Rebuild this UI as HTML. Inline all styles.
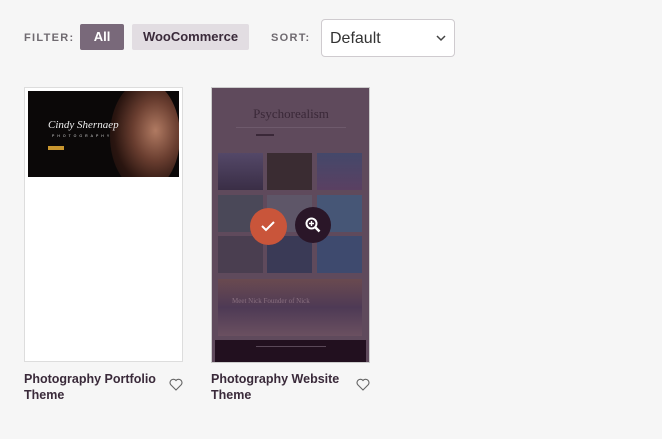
<!DOCTYPE html>
<html><head><meta charset="utf-8"><style>
*{margin:0;padding:0;box-sizing:border-box}
body{width:662px;height:439px;background:#f6f6f6;font-family:"Liberation Sans",sans-serif;position:relative;overflow:hidden}
.a{position:absolute}
.lbl{font-size:11px;letter-spacing:1.3px;color:#6f6a70;font-weight:bold}
.t{font-size:12.5px;font-weight:bold;color:#3a2a3a;line-height:16px}
.tile{position:absolute;width:45px;height:37px}
</style></head><body>
<div class="a lbl" style="left:24px;top:32px">FILTER:</div>
<div class="a" style="left:80px;top:24px;width:44px;height:26px;background:#79697a;border-radius:2px;color:#fff;font-size:13px;font-weight:bold;text-align:center;line-height:26px">All</div>
<div class="a" style="left:132px;top:24px;width:117px;height:26px;background:#e2dde2;border-radius:2px;color:#3a2a3a;font-size:13px;font-weight:bold;text-align:center;line-height:26px">WooCommerce</div>
<div class="a lbl" style="left:271px;top:32px">SORT:</div>
<div class="a" style="left:321px;top:19px;width:134px;height:38px;background:#fff;border:1px solid #cfcbcf;border-radius:4px;font-size:16px;color:#333;padding-left:8px;line-height:37px">Default
<svg class="a" style="right:8px;top:15px" width="10" height="7" viewBox="0 0 10 7"><path d="M1 1l4 4 4-4" stroke="#444" stroke-width="1.5" fill="none"/></svg></div>

<div class="a" style="left:24px;top:87px;width:159px;height:275px;background:#fff;border:1px solid #ddd"></div>
<div class="a" style="left:28px;top:91px;width:151px;height:86px;background:#0b0808;overflow:hidden">
<div class="a" style="left:82px;top:-10px;width:70px;height:110px;border-radius:50%;background:radial-gradient(ellipse at 65% 45%,#b07a62 0%,#6a3e30 35%,#2a1510 65%,#0b0808 100%)"></div>
<div class="a" style="left:20px;top:28px;color:#eee;font-family:'Liberation Serif',serif;font-style:italic;font-size:11px">Cindy Shernaep</div>
<div class="a" style="left:24px;top:43px;color:#ddd;font-size:3.5px;letter-spacing:3px">PHOTOGRAPHY</div>
<div class="a" style="left:20px;top:55px;width:16px;height:4px;background:#c9962f"></div>
</div>

<div class="a" style="left:211px;top:87px;width:159px;height:276px;background:#5f4a5c;border:1px solid #ccc"></div>
<div class="a" style="left:231px;top:106px;width:120px;text-align:center;color:#3a2838;font-family:'Liberation Serif',serif;font-size:13px">Psychorealism</div>
<div class="a" style="left:236px;top:127px;width:110px;height:1px;background:#6e5a6c"></div>
<div class="a" style="left:256px;top:134px;width:18px;height:2px;background:#3a2838"></div>
<div class="tile" style="left:218px;top:153px;background:linear-gradient(#544868,#3a2e46)"></div>
<div class="tile" style="left:267px;top:153px;background:#3a2c32"></div>
<div class="tile" style="left:317px;top:153px;background:linear-gradient(#44486a,#5a4062)"></div>
<div class="tile" style="left:218px;top:195px;background:#4a4858"></div>
<div class="tile" style="left:267px;top:195px;background:#5e5668"></div>
<div class="tile" style="left:317px;top:195px;background:#465676"></div>
<div class="tile" style="left:218px;top:236px;background:#4a3e50"></div>
<div class="tile" style="left:267px;top:236px;background:#3a3a56"></div>
<div class="tile" style="left:317px;top:236px;background:#3e4a6e"></div>
<div class="a" style="left:218px;top:279px;width:144px;height:57px;background:linear-gradient(#6a4a50,#4e3a55 50%,#6a5060)">
<div class="a" style="left:14px;top:18px;color:#8a7080;font-family:'Liberation Serif',serif;font-size:7px">Meet Nick Founder of Nick</div></div>
<div class="a" style="left:215px;top:340px;width:151px;height:22px;background:#22101f"></div>
<div class="a" style="left:256px;top:346px;width:70px;height:1px;background:#5a4858"></div>
<div class="a" style="left:250px;top:208px;width:37px;height:37px;border-radius:50%;background:#c9553a"></div>
<svg class="a" style="left:260px;top:219px" width="16" height="14" viewBox="0 0 16 14"><path d="M2 7l4 4 8-8" stroke="#fff" stroke-width="2" fill="none"/></svg>
<div class="a" style="left:295px;top:207px;width:36px;height:36px;border-radius:50%;background:#2a1628"></div>
<svg class="a" style="left:304px;top:216px" width="18" height="18" viewBox="0 0 18 18"><circle cx="7.5" cy="7.5" r="5" stroke="#fff" stroke-width="2" fill="none"/><path d="M11 11l4.5 4.5" stroke="#fff" stroke-width="2.5"/><path d="M7.5 5v5M5 7.5h5" stroke="#fff" stroke-width="1.4"/></svg>

<div class="a t" style="left:24px;top:371px">Photography Portfolio<br>Theme</div>
<div class="a t" style="left:211px;top:371px">Photography Website<br>Theme</div>
<svg class="a" style="left:169px;top:378px" width="14" height="13" viewBox="0 0 14 13"><path d="M7 12L1.8 6.8A3 3 0 0 1 7 2.5a3 3 0 0 1 5.2 4.3z" stroke="#666" stroke-width="1.1" fill="none"/></svg>
<svg class="a" style="left:356px;top:378px" width="14" height="13" viewBox="0 0 14 13"><path d="M7 12L1.8 6.8A3 3 0 0 1 7 2.5a3 3 0 0 1 5.2 4.3z" stroke="#666" stroke-width="1.1" fill="none"/></svg>
</body></html>
